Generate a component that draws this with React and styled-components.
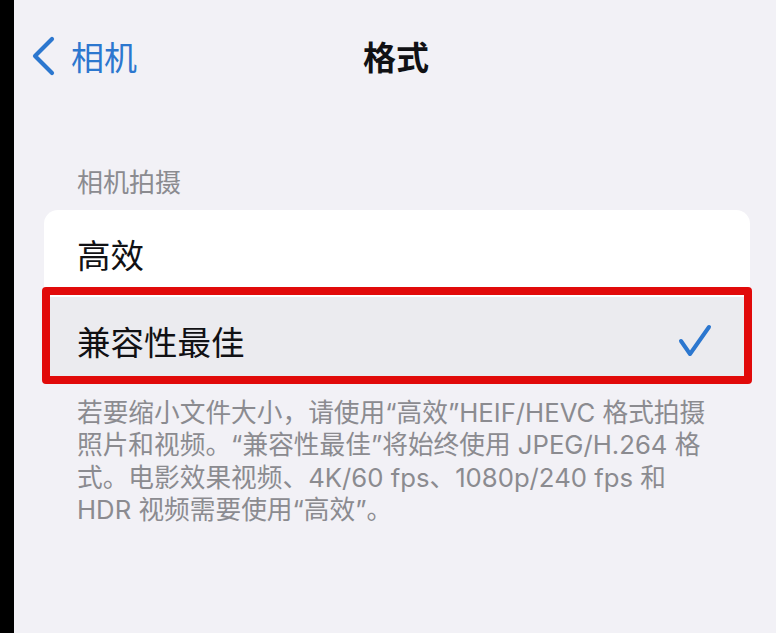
import React from 'react'
import styled, { createGlobalStyle } from 'styled-components'

const GlobalStyle = createGlobalStyle`
  html, body {
    margin: 0;
    padding: 0;
    background: #f2f1f6;
  }
  body {
    font-family: "Inter", "Noto Sans CJK SC", sans-serif;
  }
`

const palette = {
  bg: '#f2f1f6',
  blue: '#2c77cf',
  label: '#111114',
  secondary: '#8b8b90',
  selected: '#ebebef',
  marker: '#e10a0a',
}

const Device = styled.div`
  display: flex;
  width: 776px;
  height: 633px;
  overflow: hidden;
`

const Bezel = styled.div`
  width: 14px;
  flex-shrink: 0;
  background: #000;
  box-shadow: 1px 0 2px rgba(0, 0, 0, 0.6);
`

const Screen = styled.div`
  flex: 1;
  display: flex;
  flex-direction: column;
  background: ${palette.bg};
`

const NavBar = styled.header`
  display: grid;
  grid-template-columns: 1fr auto 1fr;
  align-items: center;
  height: 112px;
  padding: 0 16px 0 18px;
`

const BackButton = styled.button`
  display: flex;
  align-items: center;
  gap: 15px;
  justify-self: start;
  padding: 0;
  border: 0;
  background: none;
  color: ${palette.blue};
  font-family: "Noto Sans CJK SC", sans-serif;
  font-size: 33px;
  line-height: 1;
`

const Title = styled.h1`
  margin: 0;
  font-family: "Noto Sans CJK SC", sans-serif;
  font-size: 33px;
  font-weight: 700;
  color: ${palette.label};
`

const SectionHeader = styled.div`
  margin: 53px 0 13px 63px;
  font-family: "Noto Sans CJK SC", sans-serif;
  font-size: 26px;
  line-height: 32px;
  color: ${palette.secondary};
`

const Card = styled.div`
  margin: 0 26px 0 30px;
  border-radius: 14px;
  background: #fff;
`

const Row = styled.div`
  position: relative;
  display: flex;
  align-items: center;
  justify-content: space-between;
  height: 87px;
  padding: 0 38px 0 33px;
  box-sizing: border-box;
  background: ${p => (p.$selected ? palette.selected : 'transparent')};
  border-radius: ${p => (p.$last ? '0 0 14px 14px' : '14px 14px 0 0')};
  font-family: "Noto Sans CJK SC", sans-serif;
  font-size: 33.5px;
  color: ${palette.label};
`

const Marker = styled.span`
  position: absolute;
  top: -10px;
  bottom: 0;
  left: -2px;
  right: -2px;
  border: 8px solid ${palette.marker};
  border-radius: 4px;
  pointer-events: none;
`

const Footer = styled.p`
  margin: 13px 0 0 63px;
  font-family: "Inter", "Noto Sans CJK SC", sans-serif;
  font-size: 25.7px;
  line-height: 32.3px;
  color: ${palette.secondary};
  white-space: nowrap;
`

const Chevron = () => (
  <svg width="24" height="40" viewBox="0 0 24 40">
    <path
      d="M20 3 L3 20 L20 37"
      fill="none"
      stroke={palette.blue}
      strokeWidth="4.2"
      strokeLinecap="round"
      strokeLinejoin="round"
    />
  </svg>
)

const Check = () => (
  <svg width="34" height="34" viewBox="0 0 34 34">
    <path
      d="M3 17 L12 30 L31 3"
      fill="none"
      stroke={palette.blue}
      strokeWidth="4"
      strokeLinecap="round"
      strokeLinejoin="round"
    />
  </svg>
)

const formats = [
  { label: '高效', selected: false },
  { label: '兼容性最佳', selected: true },
]

export default function App() {
  return (
    <>
      <GlobalStyle />
      <Device>
        <Bezel />
        <Screen>
          <NavBar>
            <BackButton>
              <Chevron />
              相机
            </BackButton>
            <Title>格式</Title>
            <span />
          </NavBar>

          <SectionHeader>相机拍摄</SectionHeader>
          <Card>
            {formats.map((f, i) => (
              <Row key={f.label} $selected={f.selected} $last={i === formats.length - 1}>
                {f.label}
                {f.selected && <Check />}
                {f.selected && <Marker />}
              </Row>
            ))}
          </Card>

          <Footer>
            若要缩小文件大小，请使用“高效”HEIF/HEVC 格式拍摄
            <br />
            照片和视频。“兼容性最佳”将始终使用 JPEG/H.264 格
            <br />
            式。电影效果视频、4K/60 fps、1080p/240 fps 和
            <br />
            HDR 视频需要使用“高效”。
          </Footer>
        </Screen>
      </Device>
    </>
  )
}
